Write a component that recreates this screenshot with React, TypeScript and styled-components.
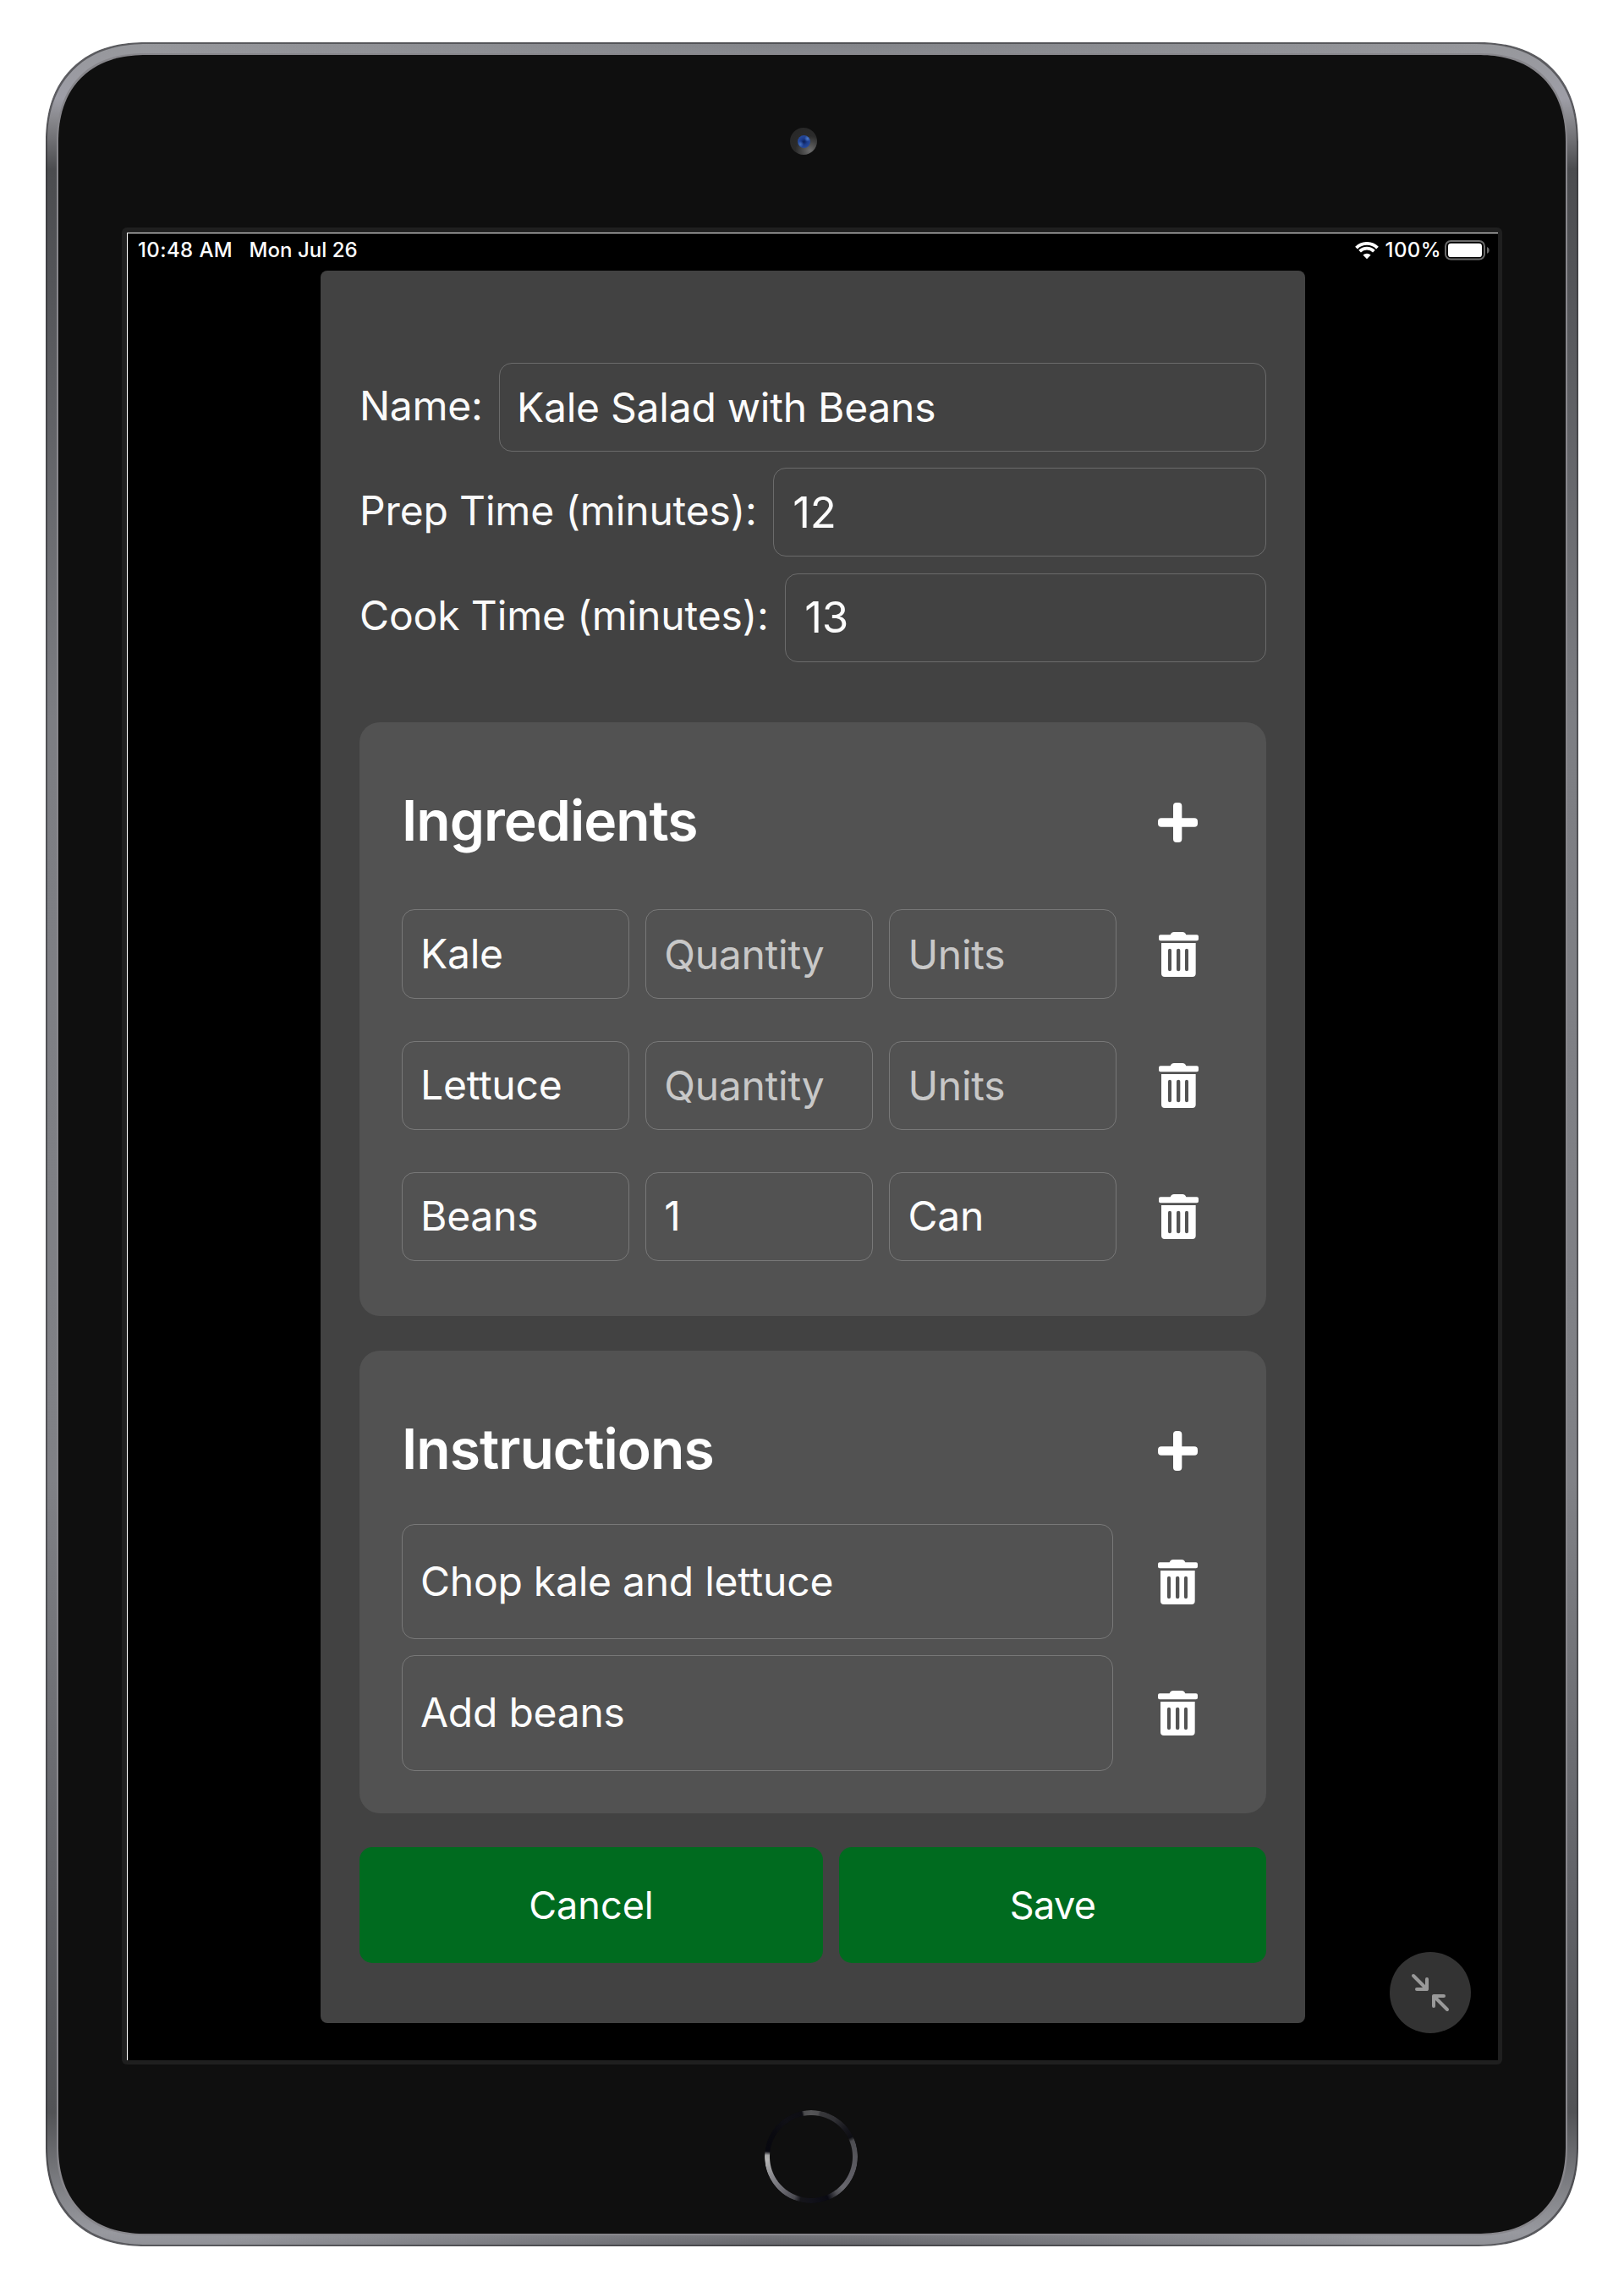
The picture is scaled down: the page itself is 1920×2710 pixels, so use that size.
import React from "react";
import styled, { createGlobalStyle } from "styled-components";

const GlobalStyle = createGlobalStyle`
  *, *::before, *::after { box-sizing: border-box; }
  body {
    margin: 0;
    background: #fff;
    color: #fff;
    font-family: "Inter", "Liberation Sans", sans-serif;
  }
`;

/* ---------- Tablet hardware ---------- */

const Page = styled.div`
  display: flex;
  justify-content: center;
  width: 1920px;
  height: 2710px;
  padding-top: 50px;
`;

const Chassis = styled.div`
  width: 1812px;
  height: 2606px;
  padding: 15px;
  border-radius: 118px;
  corner-shape: superellipse(1.2);
  background:
    radial-gradient(ellipse 700px 40px at 50% 100%, rgba(60, 60, 64, 0.55), rgba(60, 60, 64, 0) 100%),
    radial-gradient(ellipse 800px 40px at 50% 0%, rgba(80, 84, 90, 0.3), rgba(80, 84, 90, 0) 100%),
    linear-gradient(
      180deg,
      #96979b 0,
      #9e9ea7 66px,
      #8b8b90 88px,
      #707074 115px,
      #4b4c4f 150px,
      #55565a 300px,
      #7d7e83 800px,
      #808186 1700px,
      #606166 2210px,
      #525356 2447px,
      #707175 2508px,
      #86878c 2550px,
      #98999f 2590px,
      #909196 100%
    );
  box-shadow: inset 0 0 0 2px rgba(50, 50, 54, 0.6);
`;

const Face = styled.div`
  display: flex;
  flex-direction: column;
  width: 100%;
  height: 100%;
  border-radius: 104px;
  corner-shape: superellipse(1.2);
  background: #0f0f0f;
  box-shadow: 0 0 0 2px #88878c;
`;

const Forehead = styled.div`
  display: flex;
  justify-content: center;
  height: 204px;
  padding: 86px 20px 0 0;
`;

const Camera = styled.div`
  display: flex;
  align-items: center;
  justify-content: center;
  width: 32px;
  height: 32px;
  border-radius: 50%;
  background: radial-gradient(circle at 74% 84%, #6c6c6c 0, #505050 20%, #2b2b2b 48%, #262626 100%);
`;

const Lens = styled.div`
  width: 15px;
  height: 15px;
  border-radius: 50%;
  background:
    radial-gradient(circle at 78% 26%, rgba(90, 140, 220, 0.8) 0, rgba(90, 140, 220, 0) 22%),
    radial-gradient(circle at 22% 70%, rgba(80, 130, 210, 0.7) 0, rgba(80, 130, 210, 0) 24%),
    radial-gradient(circle, #0d1f55 0, #1c3c8c 35%, #284c9e 75%, #20387a 100%);
`;

const Bezel = styled.div`
  width: 1632px;
  height: 2172px;
  margin-left: 75px;
  padding: 6px 5px 5px 6px;
  border-radius: 6px;
  background: #1f1f1f;
`;

const Chin = styled.div`
  display: flex;
  justify-content: center;
  padding: 54px 2px 0 0;
`;

const HomeButton = styled.div`
  width: 110px;
  height: 110px;
  border-radius: 50%;
  background: conic-gradient(
    #555557 0deg, #505052 9deg, #38383b 12deg, #303034 32deg, #15151b 52deg, #0e0e13 64deg,
    #4c4c50 69deg, #57575c 90deg, #605f66 120deg, #68686e 135deg, #505055 145deg, #0a0a12 158deg,
    #12121a 180deg, #15151a 194deg, #4a4a50 202deg, #6a6970 220deg, #8b8b8f 245deg, #b4b4b4 266deg,
    #a8a8a8 272deg, #08080f 277deg, #09090f 300deg, #101016 325deg, #0d0d13 348deg, #4c4c4e 351deg, #555557 360deg
  );
  mask: radial-gradient(circle, transparent 48.5px, #000 49.5px);
`;

/* ---------- Screen ---------- */

const Screen = styled.div`
  position: relative;
  width: 1621px;
  height: 2161px;
  border-top: 1px solid #fff;
  border-left: 1px solid #fff;
  background: #000;
`;

const StatusBar = styled.div`
  display: flex;
  align-items: center;
  justify-content: space-between;
  height: 44px;
  padding: 0 10px 4px 12px;
  font-size: 24px;
  font-weight: 450;
  line-height: 30px;
`;

const StatusGroup = styled.div<{ $gap: number }>`
  display: flex;
  align-items: center;
  gap: ${({ $gap }) => $gap}px;
`;

const StatusText = styled.span<{ $tracking: number }>`
  letter-spacing: ${({ $tracking }) => $tracking}px;
  white-space: nowrap;
`;

const WifiIcon = styled.svg`
  display: block;
  margin-right: 4px;
`;

const Panel = styled.main`
  width: 1164px;
  height: 2072px;
  margin-left: 228px;
  padding: 109px 46px 0;
  border-radius: 8px;
  background: #424242;
`;

const FieldStack = styled.div`
  display: flex;
  flex-direction: column;
  gap: 19.3px;
`;

const FieldRow = styled.div`
  display: flex;
  align-items: center;
  gap: 19.5px;
`;

const Label = styled.label<{ $tracking: number }>`
  padding-bottom: 4px;
  font-size: 48px;
  line-height: 58px;
  letter-spacing: ${({ $tracking }) => $tracking}px;
  white-space: nowrap;
  color: #fafafa;
`;

const Field = styled.div<{
  $grow?: boolean;
  $width?: number;
  $height?: number;
  $size?: number;
  $inset?: number;
  $nudge?: number;
  $hint?: boolean;
}>`
  display: flex;
  align-items: center;
  flex: ${({ $grow }) => ($grow ? "1 1 0" : "none")};
  width: ${({ $width }) => ($width ? `${$width}px` : "auto")};
  height: ${({ $height }) => $height ?? 105}px;
  padding: ${({ $nudge = 0, $inset = 21 }) => `${Math.max($nudge, 0)}px 10px ${Math.max(-$nudge, 0)}px ${$inset}px`};
  border: 1px solid rgba(255, 255, 255, 0.22);
  border-radius: 15px;
  font-size: ${({ $size }) => $size ?? 48}px;
  line-height: 58px;
  letter-spacing: -0.25px;
  white-space: nowrap;
  color: ${({ $hint }) => ($hint ? "#c8c8c8" : "#fcfcfc")};
`;

const Card = styled.section<{ $top: number; $bottom: number }>`
  margin-top: ${({ $top }) => $top}px;
  padding: 50px 50px ${({ $bottom }) => $bottom}px;
  border-radius: 24px;
  background: #525252;
`;

const CardHeader = styled.header<{ $after: number }>`
  display: flex;
  align-items: center;
  justify-content: space-between;
  height: 132px;
  margin-bottom: ${({ $after }) => $after}px;
  padding-right: 31px;
`;

const CardTitle = styled.h2`
  margin: 0;
  font-size: 66px;
  font-weight: 600;
  line-height: 80px;
  letter-spacing: -1px;
`;

const IconButton = styled.button<{ $drop?: number }>`
  display: flex;
  margin: 0;
  padding: ${({ $drop }) => $drop ?? 0}px 0 0;
  border: 0;
  background: none;
  color: #fff;
`;

const List = styled.div<{ $gap: number }>`
  display: flex;
  flex-direction: column;
  gap: ${({ $gap }) => $gap}px;
`;

const ListRow = styled.div<{ $gap: number }>`
  display: flex;
  align-items: center;
  gap: ${({ $gap }) => $gap}px;
`;

const IngredientFields = styled.div`
  display: flex;
  gap: 19.2px;
`;

const Actions = styled.div`
  display: grid;
  grid-template-columns: 548px 505px;
  gap: 19px;
  margin-top: 40px;
`;

const ActionButton = styled.button<{ $tracking: number }>`
  height: 137px;
  padding: 1px 0 0;
  border: 0;
  border-radius: 15px;
  background: #006b1f;
  color: #fff;
  font: 400 45px/56px "Inter", "Liberation Sans", sans-serif;
  letter-spacing: ${({ $tracking }) => $tracking}px;
`;

const ShrinkButton = styled.button`
  position: absolute;
  right: 32px;
  bottom: 32px;
  display: flex;
  width: 96px;
  height: 96px;
  padding: 0;
  border: 0;
  border-radius: 50%;
  background: #333;
`;

/* ---------- Icons ---------- */

const Wifi = () => (
  <WifiIcon width="28" height="21" viewBox="0 0 28 21" fill="none" stroke="#fff" strokeWidth="3.8">
    <path d="M1.5 7.1A17.6 17.6 0 0 1 26.5 7.1" />
    <path d="M5.6 11.2A11.8 11.8 0 0 1 22.4 11.2" />
    <path d="M14 20.2L9.4 15.5A6.6 6.6 0 0 1 18.6 15.5Z" fill="#fff" stroke="none" />
  </WifiIcon>
);

const Battery = () => (
  <svg width="53" height="24" viewBox="0 0 53 24">
    <rect x="1" y="1" width="46" height="21.6" rx="6.2" fill="none" stroke="#6b6b6b" strokeWidth="2" />
    <rect x="4" y="3.7" width="40" height="16.4" rx="3.4" fill="#fff" />
    <path d="M50 8C53.6 9.4 53.6 14.4 50 15.8Z" fill="#6b6b6b" />
  </svg>
);

const Plus = () => (
  <svg width="47" height="47" viewBox="0 0 141 141" fill="currentColor">
    <rect x="54" y="0" width="31" height="141" rx="12" />
    <rect x="0" y="55" width="141" height="31" rx="12" />
  </svg>
);

const Trash = () => (
  <svg width="47" height="53" viewBox="0 0 141 159" fill="currentColor">
    <path d="M6 10H41C44 3 48 0 54 0H84C90 0 94 3 97 10H135Q141 10 141 16V25Q141 31 135 31H6Q0 31 0 25V16Q0 10 6 10Z" />
    <path
      fillRule="evenodd"
      d="M9 39H131V147Q131 159 119 159H21Q9 159 9 147ZM39 59Q33 59 33 65V133Q33 139 39 139T45 133V65Q45 59 39 59ZM69.500 59Q63 59 63 65V133Q63 139 69.500 139T76 133V65Q76 59 69.500 59ZM99 59Q93 59 93 65V133Q93 139 99 139T105 133V65Q105 59 99 59Z"
    />
  </svg>
);

const Shrink = () => (
  <svg width="96" height="96" viewBox="-48 -48 96 96" fill="none" stroke="#999" strokeWidth="4" strokeLinecap="round" strokeLinejoin="round">
    <path d="M-20 -20L-4 -4M-4 -16V-4H-16" />
    <path d="M20 20L4 4M4 16V4H16" />
  </svg>
);

/* ---------- Data ---------- */

const details = [
  { label: "Name:", tracking: -0.3, value: "Kale Salad with Beans", size: 48, inset: 20 },
  { label: "Prep Time (minutes):", tracking: -0.15, value: "12", size: 51, inset: 22 },
  { label: "Cook Time (minutes):", tracking: -0.13, value: "13", size: 51, inset: 22 },
];

const ingredients = [
  { name: "Kale", quantity: "", units: "" },
  { name: "Lettuce", quantity: "", units: "" },
  { name: "Beans", quantity: "1", units: "Can" },
];

const steps = ["Chop kale and lettuce", "Add beans"];

const IngredientField = ({ value, hint }: { value: string; hint: string }) => (
  <Field $width={269} $height={105.3} $hint={!value} $nudge={value ? -1 : 2}>
    {value || hint}
  </Field>
);

export default function App() {
  return (
    <>
      <GlobalStyle />
      <Page>
        <Chassis>
          <Face>
            <Forehead>
              <Camera>
                <Lens />
              </Camera>
            </Forehead>
            <Bezel>
              <Screen>
                <StatusBar>
                  <StatusGroup $gap={19.5}>
                    <StatusText $tracking={0.4}>10:48 AM</StatusText>
                    <StatusText $tracking={0.02}>Mon Jul 26</StatusText>
                  </StatusGroup>
                  <StatusGroup $gap={4}>
                    <Wifi />
                    <StatusText $tracking={0.4}>100%</StatusText>
                    <Battery />
                  </StatusGroup>
                </StatusBar>
                <Panel>
                  <FieldStack>
                    {details.map((d) => (
                      <FieldRow key={d.label}>
                        <Label $tracking={d.tracking}>{d.label}</Label>
                        <Field $grow $size={d.size} $inset={d.inset}>
                          {d.value}
                        </Field>
                      </FieldRow>
                    ))}
                  </FieldStack>

                  <Card $top={71.9} $bottom={65.3}>
                    <CardHeader $after={39}>
                      <CardTitle>Ingredients</CardTitle>
                      <IconButton $drop={5} aria-label="Add ingredient">
                        <Plus />
                      </IconButton>
                    </CardHeader>
                    <List $gap={49.9}>
                      {ingredients.map((item) => (
                        <ListRow key={item.name} $gap={50}>
                          <IngredientFields>
                            <IngredientField value={item.name} hint="Name" />
                            <IngredientField value={item.quantity} hint="Quantity" />
                            <IngredientField value={item.units} hint="Units" />
                          </IngredientFields>
                          <IconButton aria-label="Remove ingredient">
                            <Trash />
                          </IconButton>
                        </ListRow>
                      ))}
                    </List>
                  </Card>

                  <Card $top={40.5} $bottom={50}>
                    <CardHeader $after={23}>
                      <CardTitle>Instructions</CardTitle>
                      <IconButton $drop={5} aria-label="Add instruction">
                        <Plus />
                      </IconButton>
                    </CardHeader>
                    <List $gap={19}>
                      {steps.map((step) => (
                        <ListRow key={step} $gap={53}>
                          <Field $width={841} $height={136.3} $nudge={-1}>
                            {step}
                          </Field>
                          <IconButton aria-label="Remove instruction">
                            <Trash />
                          </IconButton>
                        </ListRow>
                      ))}
                    </List>
                  </Card>

                  <Actions>
                    <ActionButton $tracking={0}>Cancel</ActionButton>
                    <ActionButton $tracking={-0.6}>Save</ActionButton>
                  </Actions>
                </Panel>
                <ShrinkButton aria-label="Exit full screen">
                  <Shrink />
                </ShrinkButton>
              </Screen>
            </Bezel>
            <Chin>
              <HomeButton />
            </Chin>
          </Face>
        </Chassis>
      </Page>
    </>
  );
}
